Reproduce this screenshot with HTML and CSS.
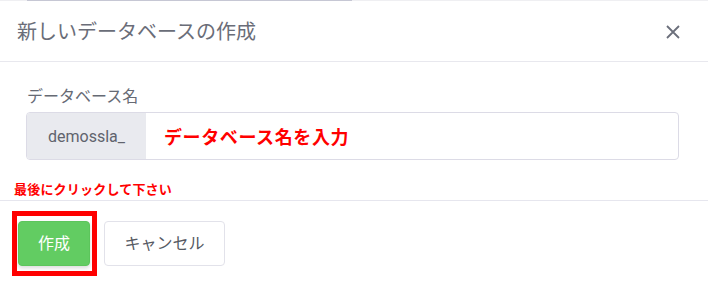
FILE: index.html
```html
<!DOCTYPE html>
<html lang="ja">
<head>
<meta charset="utf-8">
<link rel="stylesheet" href="styles.css">
</head>
<body>
<div class="modal">
  <div class="topline"><div class="topline-bar"></div></div>
  <div class="modal-header">
    <div class="modal-title">新しいデータベースの作成</div>
    <svg class="close" width="14" height="14" viewBox="0 0 14 14"><path d="M1 1L13 13M13 1L1 13" stroke="#6b6f7b" stroke-width="1.8" fill="none"/></svg>
  </div>
  <div class="modal-body">
    <div class="label">データベース名</div>
    <div class="input-group">
      <div class="addon">demossla_</div>
      <div class="input"><span class="note-big">データベース名を入力</span></div>
    </div>
  </div>
  <div class="modal-footer">
    <div class="note-small">最後にクリックして下さい</div>
    <div class="highlight"></div>
    <button class="btn btn-primary">作成</button>
    <button class="btn btn-default">キャンセル</button>
  </div>
</div>
</body>
</html>
```

FILE: styles.css
```css
html, body {
  margin: 0;
  padding: 0;
  background: #ffffff;
}
body {
  font-family: "Noto Sans CJK JP", "Noto Sans", sans-serif;
  width: 708px;
  height: 285px;
  overflow: hidden;
}
.modal {
  width: 708px;
}
.topline {
  height: 1px;
  background: #efeff2;
}
.topline-bar {
  margin-left: 27px;
  width: 325px;
  height: 1px;
  background: #c6c7d4;
}
.modal-header {
  height: 60px;
  border-bottom: 1px solid #e8e8ee;
  display: flex;
  align-items: center;
  justify-content: space-between;
  padding: 0 28px 0 17px;
}
.modal-title {
  font-size: 20px;
  line-height: 28px;
  color: #6a6d78;
  padding-bottom: 1px;
}
.close {
  display: block;
  margin-top: 1px;
}
.modal-body {
  padding: 21px 29px 40px 26px;
}
.label {
  font-size: 16px;
  line-height: 24px;
  color: #666a74;
  padding-left: 1px;
  margin-bottom: 5px;
}
.input-group {
  display: flex;
  height: 46px;
  border: 1px solid #dcdbe6;
  border-radius: 4px;
  overflow: hidden;
}
.addon {
  width: 119px;
  background: #e9eaef;
  display: flex;
  align-items: center;
  justify-content: center;
  font-family: Roboto, "Noto Sans", sans-serif;
  font-size: 16px;
  color: #60636d;
  padding-top: 1px;
}
.input {
  flex: 1;
  display: flex;
  align-items: center;
  padding-left: 18px;
}
.note-big {
  color: #ff0000;
  font-weight: 700;
  font-size: 18px;
  letter-spacing: 0.6px;
}
.modal-footer {
  position: relative;
  border-top: 1px solid #e6e6ee;
  padding: 20px 18px 0 18px;
  display: flex;
  gap: 14px;
}
.note-small {
  position: absolute;
  left: 14px;
  top: -21px;
  font-size: 13px;
  line-height: 18px;
  font-weight: 700;
  color: #ff0000;
  letter-spacing: 0.2px;
}
.highlight {
  position: absolute;
  left: 12px;
  top: 10px;
  width: 75px;
  height: 55px;
  border: 5px solid #ff0000;
}
.btn {
  height: 45px;
  font-family: "Noto Sans CJK JP", sans-serif;
  font-size: 16px;
  line-height: 20px;
  border-radius: 4px;
  padding: 0 0 3px 0;
  cursor: pointer;
}
.btn-primary {
  position: relative;
  width: 72px;
  background: #62cc62;
  border: 1px solid #5cc55c;
  color: #ffffff;
  box-shadow: 0 2px 4px rgba(0, 0, 0, 0.15);
}
.btn-default {
  width: 121px;
  background: #ffffff;
  border: 1px solid #e2e2ea;
  color: #555963;
}
```
